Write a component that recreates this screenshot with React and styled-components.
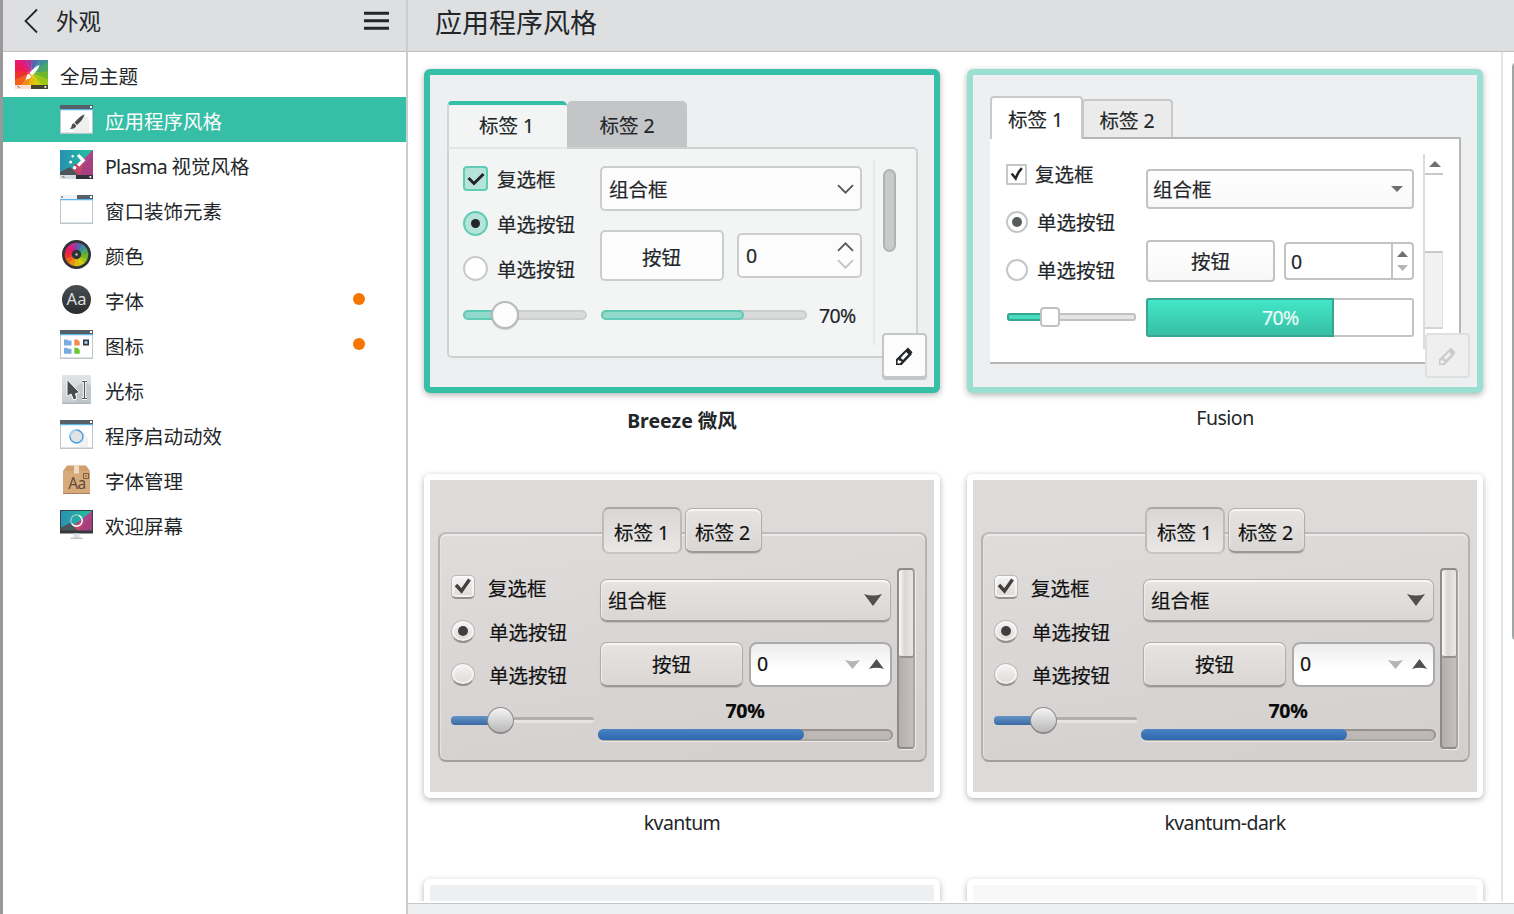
import React from 'react';
import styled, { createGlobalStyle, css } from 'styled-components';

const GlobalStyle = createGlobalStyle`
  *, *::before, *::after { box-sizing: border-box; }
  html, body { margin: 0; padding: 0; overflow: hidden; }
  body {
    font-family: "Noto Sans", "Noto Sans CJK SC", sans-serif;
    font-size: 19.5px;
    color: #232629;
    background: #fff;
  }
`;

/* ---------- window shell ---------- */

const Window = styled.div`
  display: flex;
  width: 1514px;
  height: 914px;
  overflow: hidden;
  border-left: 3px solid #999;
`;

const Sidebar = styled.nav`
  display: flex;
  flex-direction: column;
  width: 405px;
  flex: none;
  border-right: 2px solid #c9cdd0;
`;

const Header = styled.header`
  display: flex;
  align-items: center;
  height: 52px;
  flex: none;
  background: #dedfe1;
  border-bottom: 1px solid #bcbec0;
`;

const BackIcon = styled.svg`
  margin: 0 0 10px 20px;
`;

const SideTitle = styled.h2`
  margin: 0 0 8px 17px;
  font-size: 22.4px;
  line-height: 30px;
  font-weight: 400;
  flex: 1;
`;

const MenuIcon = styled.svg`
  margin: 0 17px 10px 0;
`;

const PageTitle = styled.h1`
  margin: 0 0 6px 27px;
  font-size: 27px;
  line-height: 36px;
  font-weight: 400;
`;

const Item = styled.div`
  display: flex;
  align-items: center;
  height: 45px;
  gap: 12px;
  padding-left: ${(p) => (p.$root ? 12 : 57)}px;
  padding-right: 41.5px;
  background: ${(p) => (p.$active ? '#36bfa6' : 'transparent')};
  color: ${(p) => (p.$active ? '#fcfcfc' : 'inherit')};

  svg { display: block; flex: none; }
`;

const ItemText = styled.span`
  flex: 1;
  line-height: 28px;
  padding-top: 4px;
  white-space: nowrap;
`;

const Latin = styled.span`
  letter-spacing: ${(p) => p.$tight || -0.6}px;
`;

const Dot = styled.span`
  width: 12px;
  height: 12px;
  margin-bottom: 1px;
  border-radius: 50%;
  background: #f67400;
`;

const Main = styled.main`
  flex: 1;
  min-width: 0;
  display: flex;
  flex-direction: column;
`;

const Body = styled.div`
  display: flex;
  height: 849px;
  flex: none;
  overflow: hidden;
`;

const Cards = styled.div`
  display: grid;
  grid-template-columns: 516px 516px;
  grid-auto-rows: 405px;
  column-gap: 27px;
  padding: 17px 18px 0 16px;
  width: 1093px;
  height: 849px;
  overflow: hidden;
  flex: none;
`;

const ScrollRail = styled.div`
  flex: 1;
  border-left: 2px solid #e4e5e6;
  padding: 10px 0 0 9px;
  overflow: hidden;
`;

const ScrollThumb = styled.div`
  width: 10px;
  height: 579px;
  border: 2px solid #a2a5a6;
  border-radius: 5px;
  background: #c8cacb;
`;

const Footer = styled.footer`
  flex: 1;
  margin-top: 2px;
  background: #eeeff0;
  border-top: 1px solid #c6c9cb;
`;

const Card = styled.figure`
  margin: 0;
`;

const Frame = styled.div`
  position: relative;
  height: 324px;
  border: 6px solid ${(p) => p.$edge || '#fff'};
  border-radius: 6px;
  background: ${(p) => p.$fill || '#edeff1'};
  box-shadow: 0 2px 6px rgba(0, 0, 0, 0.3);
  -webkit-text-stroke: 0.2px currentColor;
`;

const Caption = styled.figcaption`
  margin-top: ${(p) => (p.$bold ? 14 : 11)}px;
  text-align: center;
  line-height: 28px;
  font-weight: ${(p) => (p.$bold ? 700 : 400)};
`;

const EditButton = styled.div`
  position: absolute;
  right: 7px;
  bottom: 9px;
  width: 45px;
  height: 45px;
  display: flex;
  align-items: center;
  justify-content: center;
  border: 2px solid ${(p) => (p.$disabled ? '#dfe1e1' : '#c4c6c7')};
  border-radius: 4px;
  background: ${(p) => (p.$disabled ? '#efeff0' : '#fcfcfc')};
  color: ${(p) => (p.$disabled ? '#c9cbcc' : '#232629')};
  ${(p) => !p.$disabled && css`box-shadow: 0 2px 1px rgba(0, 0, 0, 0.18);`}
`;

/* ---------- parts common to the previews ---------- */

const Column = styled.div`
  display: flex;
  flex-direction: column;
  flex: none;
  width: ${(p) => p.$w}px;
`;

const Label = styled.span`
  line-height: 26px;
  white-space: nowrap;
  padding-top: ${(p) => p.$drop || 0}px;
  margin-left: ${(p) => p.$gap || 0}px;
`;

const Line = styled.div`
  display: flex;
  align-items: center;
  height: ${(p) => p.$h}px;
  margin-top: ${(p) => p.$mt || 0}px;
  padding-left: ${(p) => p.$in || 0}px;
`;

const Arrows = styled.div`
  display: flex;
  flex-direction: ${(p) => (p.$row ? 'row' : 'column')};
  align-items: center;
  gap: ${(p) => p.$gap || 0}px;
  margin-right: ${(p) => p.$end || 0}px;

  svg { display: block; }
`;

/* ---------- Breeze ---------- */

const BreezeView = styled.div`
  padding: 26px 0 0 17px;
`;

const BreezeTabs = styled.div`
  display: flex;
  height: 46px;
`;

const BreezeTab = styled.div`
  display: flex;
  justify-content: center;
  width: 120px;
  padding-top: ${(p) => (p.$on ? 8 : 12)}px;
  line-height: 26px;
  border-radius: 5px 5px 0 0;
  ${(p) => p.$on
    ? css`
        position: relative;
        height: 48px;
        padding-right: 3px;
        background: #f3f5f5;
        border: 2px solid #d3d5d5;
        border-top: 4px solid #36bfa6;
        border-right: 0;
        border-bottom-color: #e4e6e6;
      `
    : css`background: #c4c5c7;`}
`;

const BreezePanel = styled.div`
  display: flex;
  width: 471px;
  height: 211px;
  border: 2px solid #cfd1d1;
  border-radius: 0 5px 5px 5px;
  background: #f3f5f5;
  padding: 17px 0 0 14px;
`;

const BreezeCheck = styled.div`
  width: 25px;
  height: 25px;
  display: flex;
  align-items: center;
  justify-content: center;
  border: 2px solid ${(p) => (p.$on ? '#5fccb7' : '#c8caca')};
  border-radius: ${(p) => (p.$round ? '50%' : '4px')};
  background: ${(p) => (p.$on ? '#b6e3da' : '#fff')};
`;

const RadioDot = styled.span`
  width: ${(p) => p.$size}px;
  height: ${(p) => p.$size}px;
  border-radius: 50%;
  background: ${(p) => p.$color};
`;

const BreezeField = styled.div`
  display: flex;
  align-items: center;
  justify-content: ${(p) => (p.$center ? 'center' : 'space-between')};
  width: ${(p) => p.$w}px;
  height: ${(p) => p.$h}px;
  border: 2px solid #cccece;
  border-radius: 5px;
  background: #fcfcfc;
  padding: 0 6px 0 ${(p) => (p.$center ? 5 : 7)}px;
`;

const BreezeBar = styled.div`
  height: 10px;
  width: ${(p) => p.$w}px;
  border-radius: 5px;
  border: 2px solid #cccece;
  background: #dadcdb;
`;

const BreezeFill = styled.div`
  height: 10px;
  width: ${(p) => p.$w}px;
  margin: -2px 0 0 -2px;
  border-radius: 5px;
  border: 2px solid #5fcab5;
  background: #93d9cb;
`;

const BreezeKnob = styled.div`
  width: 28px;
  height: 28px;
  margin-left: -96px;
  border-radius: 50%;
  border: 2px solid #b8baba;
  background: #fcfcfc;
  box-shadow: 0 1px 1px rgba(0, 0, 0, 0.15);
`;

const BreezeRail = styled.div`
  height: 185px;
  margin: -6px 0 0 11px;
  border-left: 2px solid #e6e8e8;
  padding: 9px 0 0 8px;
`;

const BreezeThumb = styled.div`
  width: 13px;
  height: 83px;
  border-radius: 7px;
  border: 2px solid #b1b3b3;
  background: #c9cbca;
`;

/* ---------- Fusion ---------- */

const FusionView = styled.div`
  padding: 21px 0 0 17px;
`;

const FusionTabs = styled.div`
  display: flex;
  align-items: flex-end;
  height: 41px;
`;

const FusionTab = styled.div`
  display: flex;
  justify-content: center;
  border: 2px solid #c8caca;
  border-bottom: 0;
  border-radius: 4px 4px 0 0;
  line-height: 26px;
  ${(p) => p.$on
    ? css`
        position: relative;
        width: 93px;
        height: 43px;
        margin-bottom: -2px;
        padding: 9px 2px 0 0;
        background: #fff;
      `
    : css`
        width: 91px;
        height: 38px;
        margin-left: -1px;
        padding: 7px 1px 0 0;
        background: #ebebeb;
      `}
`;

const FusionPanel = styled.div`
  display: flex;
  width: 471px;
  height: 227px;
  border: 2px solid #b5b7b7;
  border-left: 0;
  border-radius: 0 2px 0 0;
  background: #fff;
  padding: 24px 0 0 16px;
`;

const FusionCheck = styled.div`
  width: ${(p) => (p.$round ? 22 : 21)}px;
  height: ${(p) => (p.$round ? 22 : 21)}px;
  display: flex;
  align-items: center;
  justify-content: center;
  border: 2px solid #c5c7c7;
  border-radius: ${(p) => (p.$round ? '50%' : '1px')};
  background: #fff;
`;

const FusionField = styled.div`
  display: flex;
  align-items: center;
  justify-content: ${(p) => (p.$center ? 'center' : 'space-between')};
  width: ${(p) => p.$w}px;
  height: ${(p) => p.$h}px;
  border: 2px solid #c2c4c4;
  border-radius: 4px;
  background: ${(p) => (p.$plain ? '#fff' : 'linear-gradient(#fff, #f8f8f8)')};
  padding-left: ${(p) => (p.$center ? 0 : 5)}px;
`;

const FusionSteps = styled.div`
  display: flex;
  flex-direction: column;
  align-items: center;
  justify-content: center;
  gap: 8px;
  width: 21px;
  align-self: stretch;
  border-left: 2px solid #c2c4c4;

  svg { display: block; }
`;

const FusionTrack = styled.div`
  width: 129px;
  height: 8px;
  border: 2px solid #c0c2c2;
  border-radius: 3px;
  background: #e5e5e5;
`;

const FusionTrackFill = styled.div`
  width: 40px;
  height: 8px;
  margin: -2px 0 0 -2px;
  border: 2px solid #36a68f;
  border-radius: 3px;
  background: #47dcc0;
`;

const FusionKnob = styled.div`
  width: 20px;
  height: 20px;
  margin-left: -96px;
  border: 2px solid #c0c2c2;
  border-radius: 4px;
  background: #fff;
`;

const FusionProgress = styled.div`
  display: flex;
  width: 268px;
  height: 39px;
  border: 2px solid #c2c4c4;
  border-radius: 3px;
  background: #fff;
`;

const FusionProgressFill = styled.div`
  display: flex;
  align-items: center;
  width: 188px;
  height: 39px;
  flex: none;
  margin: -2px 0 0 -2px;
  padding: 0 0 0 114px;
  border: 2px solid #3aa591;
  border-radius: 3px 0 0 3px;
  background: linear-gradient(#43e6c8, #37bfa5);
  color: #eefaf7;
`;

const FusionScroll = styled.div`
  width: 20px;
  height: 195px;
  margin: -9px 0 0 9px;
  border-left: 2px solid #dcdcdc;
`;

const FusionScrollTop = styled.div`
  display: flex;
  justify-content: center;
  height: 21px;
  padding: 7px 0 0 1px;
  border-bottom: 2px solid #c8c8c8;
`;

const FusionThumb = styled.div`
  height: 78px;
  margin-top: 76px;
  border: 1px solid #e2e2e2;
  border-width: 2px 1px 2px 0;
  border-top-color: #c8c8c8;
  border-bottom-color: #d4d4d4;
  background: #f1f1f1;
`;

/* ---------- Kvantum ---------- */

const KvView = styled.div`
  padding: 26px 0 0 8px;
  color: #111;
`;

const KvTabs = styled.div`
  display: flex;
  position: relative;
  align-items: center;
  height: 48px;
  gap: 3px;
  padding-left: 164px;
`;

const raised = css`
  border: 1px solid #b0adab;
  border-bottom: 2px solid #9b9896;
  background: linear-gradient(#e6e4e2, #dad6d4);
  box-shadow: inset 0 2px 1px #f8f7f7, inset 1px 0 1px #eeecec, 0 1px 1px rgba(0, 0, 0, 0.12);
`;

const KvTab = styled.div`
  display: flex;
  align-items: center;
  justify-content: center;
  border-radius: 7px;
  ${(p) => p.$on
    ? css`
        width: 80px;
        height: 47px;
        padding: 2px 1px 0 0;
        border: 2px solid #bebbba;
        border-top-color: #aaa7a6;
        border-bottom-color: #c9c6c5;
        background: linear-gradient(#d9d6d5, #e9e7e6);
      `
    : css`
        width: 77px;
        height: 45px;
        padding: 3px 2px 0 0;
        ${raised}
      `}
`;

const KvPanel = styled.div`
  display: flex;
  width: 489px;
  height: 230px;
  margin-top: -22px;
  padding: 35px 0 0 10px;
  border: 2px solid #b5b2b1;
  border-top-color: #bfbcbb;
  border-bottom-color: #a19e9d;
  border-radius: 8px;
  background: linear-gradient(172deg, #dfdddc, #d9d6d5 45%, #d3cfce);
  box-shadow: inset 0 2px 1px #eceaea, inset 1px 0 1px #e5e3e2;
`;

const KvCheck = styled.div`
  width: 24px;
  height: ${(p) => (p.$round ? 23 : 24)}px;
  display: flex;
  align-items: center;
  justify-content: center;
  border-radius: ${(p) => (p.$round ? '50%' : '5px')};
  border: 1px solid #bcb9b7;
  border-bottom: 2px solid #94918f;
  background: linear-gradient(#f5f4f4, #dedad8);
  box-shadow: inset 0 0 0 2px rgba(250, 250, 250, 0.7);
`;

const KvButton = styled.div`
  display: flex;
  align-items: center;
  justify-content: ${(p) => (p.$center ? 'center' : 'space-between')};
  width: ${(p) => p.$w}px;
  height: ${(p) => p.$h}px;
  padding: ${(p) => (p.$center ? '0' : '0 8px 0 7px')};
  border-radius: 7px;
  ${raised}

  svg { display: block; }
`;

const KvSpin = styled.div`
  display: flex;
  align-items: center;
  justify-content: space-between;
  width: 143px;
  height: 45px;
  margin-left: 6px;
  padding: 0 6px 0 6px;
  border: 2px solid #adabaa;
  border-radius: 8px;
  background: linear-gradient(#ececec, #fff 60%);
`;

const KvTrack = styled.div`
  width: 143px;
  height: 6px;
  border-top: 3px solid #b3aeab;
  border-bottom: 3px solid #e6e4e3;
  border-radius: 3px;
`;

const KvTrackFill = styled.div`
  width: 46px;
  height: 9px;
  margin-left: -143px;
  border-radius: 4px 0 0 4px;
  background: linear-gradient(#6493c6, #3a6aa3);
`;

const KvKnob = styled.div`
  width: 27px;
  height: 27px;
  margin-left: -10px;
  border-radius: 50%;
  border: 1px solid #8c8a89;
  border-bottom-width: 2px;
  background: linear-gradient(#f4f4f4, #b9b9b9);
`;

const KvPercent = styled.div`
  margin-top: 11px;
  padding-right: 3px;
  line-height: 26px;
  text-align: center;
  font-size: 19.5px;
  font-weight: 700;
  color: #0a0a0a;
`;

const KvProgress = styled.div`
  width: 295px;
  height: 12px;
  margin: 5px 0 0 -2px;
  border: 2px solid #96918e;
  border-bottom-color: #aaa6a4;
  border-radius: 6px;
  background: #bdb8b5;
  box-shadow: 0 1px 0 #e9e7e7;
`;

const KvProgressFill = styled.div`
  width: 206px;
  height: 11px;
  margin: -2px 0 0 -2px;
  border-radius: 6px;
  background: linear-gradient(#4b83c3, #2c68ad);
`;

const KvScroll = styled.div`
  width: 18px;
  height: 181px;
  margin: -1px 0 0 4px;
  border: 2px solid #8f8b89;
  border-right-color: #a9a5a2;
  border-radius: 4px;
  background: linear-gradient(90deg, #b3aeaa, #c5c0bd);
  box-shadow: 1px 1px 1px #efeeed;
`;

const KvScrollThumb = styled.div`
  width: 15px;
  height: 88px;
  border-radius: 3px;
  border-bottom: 2px solid #938f8d;
  border-right: 1px solid #9b9795;
  background: linear-gradient(90deg, #fafafa, #dad6d4 40%, #eae8e7);
`;

/* ---------- small drawings ---------- */

const Chevron = ({ up, color = '#55585a' }) => (
  <svg width="17" height="10" viewBox="0 0 17 10" fill="none" stroke={color} strokeWidth="1.8">
    <path d={up ? 'M1 8.8 8.5 1.3 16 8.8' : 'M1 1.2 8.5 8.7 16 1.2'} />
  </svg>
);

const Triangle = ({ up, color = '#6e7072', w = 12, h = 6 }) => (
  <svg width={w} height={h} viewBox="0 0 12 6" preserveAspectRatio="none" fill={color}>
    <path d={up ? 'M0 6 6 0 12 6Z' : 'M0 0 6 6 12 0Z'} />
  </svg>
);

const Barb = ({ up, color = '#50504f', w = 18, h = 12 }) => (
  <svg width={w} height={h} viewBox="0 0 18 12" preserveAspectRatio="none" fill={color}>
    <path d={up ? 'M0 12Q9 9 18 12L9 0Z' : 'M0 0Q9 3 18 0L9 12Z'} />
  </svg>
);

const Pencil = () => (
  <svg width="17" height="18" viewBox="0 0 18 18" preserveAspectRatio="none" fill="currentColor">
    <path fillRule="evenodd" d="M12.7.5 17.5 5.3 16.3 6.6 16.8 7.2 6 18H0V12.3ZM10.8 5 5 10.8 7.3 13.1 13.1 7.3ZM3.3 12.3 1.6 14.1V16.5H4L5.9 14.8 4.9 13.8 3.5 13.9Z" />
  </svg>
);

const Tick = ({ w = 18, h = 14, d = 'M1.5 6 7 11.5 16.5 2', sw = 3, color = '#232629' }) => (
  <svg width={w} height={h} viewBox="0 0 18 14" fill="none" stroke={color} strokeWidth={sw}>
    <path d={d} />
  </svg>
);

/* ---------- sidebar icons ---------- */

const hues = ['#5b62b5', '#3f8f9c', '#4aa56b', '#6cb52d', '#9cc51c', '#d3cd0b', '#e5b90c', '#f08d15', '#f0601c', '#ee3030', '#ea1c52', '#e31877', '#a33a98'];

const Wheel = ({ cx, cy, r }) => hues.map((c, i) => {
  const a = (i / hues.length) * Math.PI * 2 - Math.PI / 2;
  const b = ((i + 1.08) / hues.length) * Math.PI * 2 - Math.PI / 2;
  return (
    <path
      key={c}
      fill={c}
      d={`M${cx} ${cy}L${cx + r * Math.cos(a)} ${cy + r * Math.sin(a)}A${r} ${r} 0 0 1 ${cx + r * Math.cos(b)} ${cy + r * Math.sin(b)}Z`}
    />
  );
});

const Brush = ({ color }) => (
  <g fill={color}>
    <path d="M24.5 5Q21 5.5 14.5 13L17 15.5Q23 10.5 24.5 5Z" />
    <path d="M13.8 13.7 16.3 16.3Q15 19.5 10 19.5 11.8 17.5 11.7 16 12 14 13.8 13.7Z" />
  </g>
);

const TitleBar = ({ split }) => (
  <g>
    <path d="M0 0H33V29H0Z" fill="#bdc6ca" />
    <path d="M1 5H32V27.5H1Z" fill="#fff" />
    <path d="M0 0H33V4H0Z" fill="#566069" />
    {split && <path d="M0 0H17V4H0Z" fill="#eff0f1" />}
    {split && <path d="M1.3 1.3h1.5v1.5h-1.5z" fill="#555" />}
    <path d="M0 4H33V5.2H0Z" fill="#5cb6e6" />
    <path d="M30 1h2v2h-2z" fill="#fff" />
  </g>
);

const Svg33 = ({ children }) => <svg width="33" height="29" viewBox="0 0 33 29">{children}</svg>;

const Wallpaper = ({ h }) => (
  <g>
    <path d={`M0 0H33V${h}H0Z`} fill="url(#wpTeal)" />
    <path d={`M33 0V${h}H7Z`} fill="#b0468a" />
    <path d={`M33 6V${h}H14Z`} fill="#a63f7d" />
    <path d={`M15 14 24 12 20 ${h}H11Z`} fill="#c34669" />
    <path d={`M0 ${h}V${h - 3}L10 ${h - 8} 18 ${h}Z`} fill="#4b5559" />
  </g>
);

const icons = {
  global: (
    <Svg33>
      <clipPath id="globalClip"><path d="M0 0H33V29H0Z" /></clipPath>
      <g clipPath="url(#globalClip)"><Wheel cx={16.5} cy={13} r={25} /></g>
      <path d="M0 25H16V29H0Z" fill="#fbdcd0" />
      <path d="M16 25H33V29H16Z" fill="#44442e" />
      <path d="M2.5 25.800 4.500 27.800" stroke="#555" />
      <path d="M29.5 26h1.8v1.8h-1.8z" fill="#fff" />
      <Brush color="#fff" />
    </Svg33>
  ),
  style: (
    <Svg33>
      <TitleBar />
      <path d="M24 9 29 14V27.5H17L10 23.5Z" fill="#eeefef" />
      <g transform="translate(0 4.5)"><Brush color="#4a4d4f" /></g>
    </Svg33>
  ),
  plasma: (
    <Svg33>
      <Wallpaper h={25} />
      <path d="M0 25H16V29H0Z" fill="#d6dcdd" />
      <path d="M16 25H33V29H16Z" fill="#33323c" />
      <path d="M29.5 26h1.8v1.8h-1.8z" fill="#fff" />
      <path d="M2.5 26 4.5 28" stroke="#555" />
      <path d="M18 5 23.2 10.3 18 15.6" fill="none" stroke="#fff" strokeWidth="3.2" />
      <g fill="#fff"><circle cx="12.7" cy="6.2" r="1.2" /><circle cx="10.6" cy="12" r="1.5" /><circle cx="14.6" cy="17.7" r="1.8" /></g>
    </Svg33>
  ),
  decoration: <Svg33><TitleBar split /></Svg33>,
  colors: (
    <Svg33>
      <circle cx="16.5" cy="14.5" r="14.5" fill="#303438" />
      <Wheel cx={16.5} cy={14.5} r={11.8} />
      <circle cx="16.5" cy="14.5" r="4.7" fill="#2e3236" />
      <circle cx="16.5" cy="14.5" r="1.3" fill="#bbb" />
    </Svg33>
  ),
  fonts: (
    <Svg33>
      <circle cx="16.5" cy="14.5" r="14.5" fill="url(#darkDisc)" />
      <text x="16.5" y="20.4" fontSize="16.5" textAnchor="middle" fill="#dcdedf">Aa</text>
    </Svg33>
  ),
  icons: (
    <Svg33>
      <TitleBar />
      <path d="M4 9.5h3l1 1h3.5V15.5H4ZM4 17.8h3l1 1h3.5V23.8H4Z" fill="#7aabde" />
      <path d="M14.3 9.5h3.2l2.2 2.2V15.5h-5.4Z" fill="#f28b4d" />
      <path d="M14.3 17.8h3.2l2.2 2.2V23.8h-5.4Z" fill="#6bc730" />
      <path d="M23 9.5h6V15.5h-6Z" fill="#2f3943" />
      <path d="M24.5 11.2h3v2.6h-3Z" fill="#a9d8ee" />
    </Svg33>
  ),
  cursor: (
    <Svg33>
      <rect x="2" y="0" width="29" height="29" rx="1.5" fill="url(#greyTile)" />
      <path d="M2.3 28.3H30.7" stroke="#a9b1b5" strokeWidth="1.2" />
      <path d="M8 17 19 28H31V11L25 6Z" fill="#b7bfc2" opacity=".6" />
      <path d="M7 4.500V21.500L11 19 13.500 25 16.800 23.500 15.500 18.800 19.500 17.500Z" fill="#4a4b4c" stroke="#fff" strokeWidth="1" />
      <path d="M22 6.500H27M22 23.500H27M24.500 6.500V23.500" stroke="#fff" strokeWidth="3.2" />
      <path d="M22 6.500H27M22 23.500H27M24.500 6.500V23.500" stroke="#555" strokeWidth="1.2" />
    </Svg33>
  ),
  launch: (
    <Svg33>
      <TitleBar />
      <path d="M21 11 28 18V27H21L12 22Z" fill="#f0f1f2" />
      <circle cx="16.5" cy="16.5" r="6.5" fill="#e1e2e3" stroke="#3f9de0" strokeWidth="1.4" />
      <path d="M10 16.5A6.5 6.5 0 0 1 16.5 10" fill="none" stroke="#a9d3f0" strokeWidth="1.4" />
    </Svg33>
  ),
  package: (
    <Svg33>
      <path d="M3 6 7 .5H26L30 6V29H3Z" fill="#cfa06d" />
      <path d="M3 6H30V28H3Z" fill="#d6aa7b" />
      <path d="M14 .5H19V9L17.8 8 16.5 9 15.3 8 14 9Z" fill="#f0dcc4" />
      <path d="M3 28.5H30" stroke="#a98058" />
      <rect x="23.5" y="8.5" width="5" height="5" fill="none" stroke="#7e5f43" />
      <path d="M25.3 10.3h1.5v1.5h-1.5z" fill="#7e5f43" />
      <text x="17" y="24" fontSize="15.5" textAnchor="middle" fill="#5f4b3a" letterSpacing="-0.5">Aa</text>
    </Svg33>
  ),
  splash: (
    <Svg33>
      <Wallpaper h={21} />
      <path d="M.5 .5H32.5V22H.5Z" fill="none" stroke="#3b4045" />
      <path d="M0 20.5H33V23.5H0Z" fill="#34383c" />
      <path d="M13.5 23.5H19.5V28H13.5Z" fill="#dde1e3" />
      <path d="M10.5 28.3H22.5" stroke="#a9b1b5" strokeWidth="1" />
      <circle cx="16.5" cy="10.5" r="5.7" fill="none" stroke="#a9c5cc" strokeWidth="1.3" />
      <path d="M19 5.4A5.7 5.7 0 1 1 12 14" fill="none" stroke="#fff" strokeWidth="1.3" />
    </Svg33>
  ),
};

const Defs = styled.svg`
  position: absolute;
  width: 0;
  height: 0;
`;

const SharedGradients = () => (
  <Defs>
    <defs>
      <linearGradient id="wpTeal" x1="0" y1="0" x2="1" y2="0">
        <stop offset="0" stopColor="#2a8fb4" /><stop offset="1" stopColor="#1fc49a" />
      </linearGradient>
      <linearGradient id="darkDisc" x1="0" y1="0" x2="0" y2="1">
        <stop offset="0" stopColor="#474d51" /><stop offset="1" stopColor="#2a2d30" />
      </linearGradient>
      <linearGradient id="greyTile" x1="0" y1="0" x2="0" y2="1">
        <stop offset="0" stopColor="#dfe4e6" /><stop offset="1" stopColor="#c6cdd0" />
      </linearGradient>
    </defs>
  </Defs>
);

const menu = [
  { icon: 'global', text: '全局主题', root: true },
  { icon: 'style', text: '应用程序风格', active: true },
  { icon: 'plasma', text: <><Latin $tight={-0.7}>Plasma </Latin>视觉风格</> },
  { icon: 'decoration', text: '窗口装饰元素' },
  { icon: 'colors', text: '颜色' },
  { icon: 'fonts', text: '字体', changed: true },
  { icon: 'icons', text: '图标', changed: true },
  { icon: 'cursor', text: '光标' },
  { icon: 'launch', text: '程序启动动效' },
  { icon: 'package', text: '字体管理' },
  { icon: 'splash', text: '欢迎屏幕' },
];

/* ---------- previews ---------- */

const BreezePreview = () => (
  <BreezeView>
    <BreezeTabs>
      <BreezeTab $on>标签 1</BreezeTab>
      <BreezeTab>标签 2</BreezeTab>
    </BreezeTabs>
    <BreezePanel>
      <Column $w={137}>
        <Line $h={25}><BreezeCheck $on><Tick /></BreezeCheck><Label $gap={9} $drop={2}>复选框</Label></Line>
        <Line $h={25} $mt={20}><BreezeCheck $on $round><RadioDot $size={9} $color="#232629" /></BreezeCheck><Label $gap={9} $drop={2}>单选按钮</Label></Line>
        <Line $h={25} $mt={20}><BreezeCheck $round /><Label $gap={9} $drop={2}>单选按钮</Label></Line>
        <Line $h={28} $mt={20}>
          <BreezeBar $w={124}><BreezeFill $w={45} /></BreezeBar>
          <BreezeKnob />
        </Line>
      </Column>
      <Column $w={262}>
        <BreezeField $w={262} $h={45}><Label $drop={2}>组合框</Label><Chevron /></BreezeField>
        <Line $h={51} $mt={19}>
          <BreezeField $center $w={124} $h={51}><Label $drop={4}>按钮</Label></BreezeField>
          <Label $gap={13} />
          <BreezeField $w={125} $h={45}>
            <Label $drop={1}>0</Label>
            <Arrows $gap={7}><Chevron up /><Chevron color="#c0c2c3" /></Arrows>
          </BreezeField>
        </Line>
        <Line $h={28} $mt={20}>
          <Label $gap={1} />
          <BreezeBar $w={206}><BreezeFill $w={143} /></BreezeBar>
          <Label $gap={12} $drop={1}><Latin>70%</Latin></Label>
        </Line>
      </Column>
      <BreezeRail><BreezeThumb /></BreezeRail>
    </BreezePanel>
  </BreezeView>
);

const FusionPreview = () => (
  <FusionView>
    <FusionTabs>
      <FusionTab $on>标签 1</FusionTab>
      <FusionTab>标签 2</FusionTab>
    </FusionTabs>
    <FusionPanel>
      <Column $w={140}>
        <Line $h={22}><FusionCheck><Tick w={16} h={16} d="M3 6.500 7.500 12Q10 5 14.500 .5" sw={2.8} /></FusionCheck><Label $gap={8} $drop={1}>复选框</Label></Line>
        <Line $h={22} $mt={26}><FusionCheck $round><RadioDot $size={10} $color="#595c5e" /></FusionCheck><Label $gap={9} $drop={1}>单选按钮</Label></Line>
        <Line $h={22} $mt={26}><FusionCheck $round /><Label $gap={9} $drop={2}>单选按钮</Label></Line>
        <Line $h={20} $mt={26} $in={1}>
          <FusionTrack><FusionTrackFill /></FusionTrack>
          <FusionKnob />
        </Line>
      </Column>
      <Column $w={268}>
        <Line $h={40} $mt={6}><FusionField $w={268} $h={40}><Label $drop={2}>组合框</Label><Arrows $end={9}><Triangle /></Arrows></FusionField></Line>
        <Line $h={42} $mt={31}>
          <FusionField $center $w={129} $h={42}><Label $drop={2}>按钮</Label></FusionField>
          <Label $gap={9} />
          <FusionField $plain $w={130} $h={38}>
            <Label $drop={1}>0</Label>
            <FusionSteps><Triangle up w={11} /><Triangle w={11} color="#b5b7b7" /></FusionSteps>
          </FusionField>
        </Line>
        <Line $h={39} $mt={16}>
          <FusionProgress><FusionProgressFill><Latin>70%</Latin></FusionProgressFill></FusionProgress>
        </Line>
      </Column>
      <FusionScroll>
        <FusionScrollTop><Triangle up /></FusionScrollTop>
        <FusionThumb />
      </FusionScroll>
    </FusionPanel>
  </FusionView>
);

const KvantumPreview = () => (
  <KvView>
    <KvTabs>
      <KvTab $on>标签 1</KvTab>
      <KvTab>标签 2</KvTab>
    </KvTabs>
    <KvPanel>
      <Column $w={150}>
        <Line $h={24} $mt={6} $in={1}><KvCheck><Tick w={18} h={20} d="M2 5 7.500 11 15.500 -.5" sw={3.4} color="#40403f" /></KvCheck><Label $gap={13} $drop={3}>复选框</Label></Line>
        <Line $h={24} $mt={20} $in={1}><KvCheck $round><RadioDot $size={10} $color="#40403f" /></KvCheck><Label $gap={14} $drop={3}>单选按钮</Label></Line>
        <Line $h={24} $mt={19} $in={1}><KvCheck $round /><Label $gap={14} $drop={3}>单选按钮</Label></Line>
        <Line $h={28} $mt={20} $in={1}><KvTrack /><KvTrackFill /><KvKnob /></Line>
      </Column>
      <Column $w={293}>
        <Line $h={43} $mt={10}><KvButton $w={291} $h={43}><Label $drop={2}>组合框</Label><Barb /></KvButton></Line>
        <Line $h={46} $mt={19}>
          <KvButton $center $w={143} $h={45}><Label $drop={2}>按钮</Label></KvButton>
          <KvSpin><Label>0</Label><Arrows $row $gap={9}><Barb w={15} h={9} color="#b5b5b5" /><Barb up w={15} h={10} /></Arrows></KvSpin>
        </Line>
        <KvPercent><Latin $tight={-0.3}>70%</Latin></KvPercent>
        <KvProgress><KvProgressFill /></KvProgress>
      </Column>
      <KvScroll><KvScrollThumb /></KvScroll>
    </KvPanel>
  </KvView>
);

export default function App() {
  return (
    <Window>
      <GlobalStyle />
      <SharedGradients />
      <Sidebar>
        <Header>
          <BackIcon width="16" height="26" viewBox="0 0 16 26" fill="none" stroke="#232629" strokeWidth="1.8">
            <path d="M14 1.500 2.500 13 14 24.500" />
          </BackIcon>
          <SideTitle>外观</SideTitle>
          <MenuIcon width="25" height="20" viewBox="0 0 25 20" stroke="#232629" strokeWidth="3">
            <path d="M0 2.300H25M0 9.800H25M0 17.300H25" />
          </MenuIcon>
        </Header>
        {menu.map((m) => (
          <Item key={m.icon} $root={m.root} $active={m.active}>
            {icons[m.icon]}
            <ItemText>{m.text}</ItemText>
            {m.changed && <Dot />}
          </Item>
        ))}
      </Sidebar>
      <Main>
        <Header><PageTitle>应用程序风格</PageTitle></Header>
        <Body>
          <Cards>
            <Card>
              <Frame $edge="#36bfa6"><BreezePreview /><EditButton><Pencil /></EditButton></Frame>
              <Caption $bold>Breeze 微风</Caption>
            </Card>
            <Card>
              <Frame $edge="#9bdfd3"><FusionPreview /><EditButton $disabled><Pencil /></EditButton></Frame>
              <Caption><Latin $tight={-0.5}>Fusion</Latin></Caption>
            </Card>
            <Card>
              <Frame $fill="#dedad9"><KvantumPreview /></Frame>
              <Caption><Latin $tight={-0.6}>kvantum</Latin></Caption>
            </Card>
            <Card>
              <Frame $fill="#dedad9"><KvantumPreview /></Frame>
              <Caption><Latin $tight={-0.6}>kvantum-dark</Latin></Caption>
            </Card>
            <Card><Frame /></Card>
            <Card><Frame $fill="#f8f8f8" /></Card>
          </Cards>
          <ScrollRail><ScrollThumb /></ScrollRail>
        </Body>
        <Footer />
      </Main>
    </Window>
  );
}
